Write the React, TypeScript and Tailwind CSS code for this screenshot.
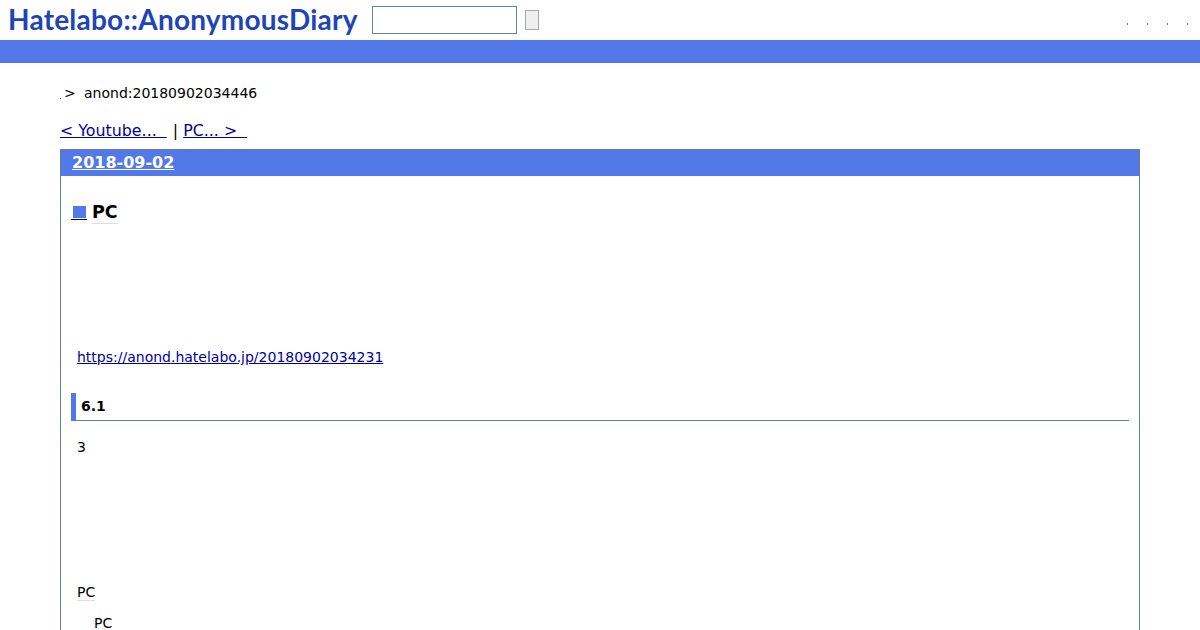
export default function App() {
  const font = { fontFamily: '"DejaVu Sans", sans-serif' };
  return (
    <div className="h-[630px] w-[1200px] overflow-hidden bg-white text-black" style={font}>
      <header className="flex h-10 items-start">
        <a className="ml-2 mt-0.5 w-[352px] whitespace-nowrap font-['Lato',sans-serif] text-[28px] leading-[34px] font-bold tracking-[0.22px] text-[#1f45b5]">
          Hatelabo::AnonymousDiary
        </a>
        <input className="ml-3 mt-1.5 h-7 w-[145px] border border-[#6b7f9f] bg-white" />
        <button className="ml-2 mt-2.5 h-5 w-3.5 border border-[#a9a9a9] bg-[#efefef]" />
        <div className="ml-auto mr-3 mt-[23px] flex gap-[19px]">
          <span className="h-0.5 w-px bg-[#777]" />
          <span className="h-0.5 w-px bg-[#777]" />
          <span className="h-0.5 w-px bg-[#777]" />
          <span className="h-0.5 w-px bg-[#777]" />
        </div>
      </header>
      <div className="h-[23px] bg-[#5279e7]" />
      <main className="px-[60px]">
        <p className="mt-[21px] flex h-[18px] items-center text-sm leading-[18px]">
          <span className="flex h-[18px] w-1 items-end pb-0.5">
            <span className="mb-px h-px w-px bg-[#666]" />
          </span>
          <span className="w-5">&gt;</span>
          <span>anond:20180902034446</span>
        </p>
        <nav className="mt-[19px] h-[19px] text-[15.84px] leading-[19px] whitespace-pre">
          <a className="text-[#0000a0] underline">&lt; Youtube...  </a>
          <span className="ml-px"> | </span>
          <a className="text-[#0000a0] underline">PC... &gt;  </a>
        </nav>
        <section className="mt-[9px] h-[600px] border border-[#6b7aa5]">
          <h2 className="h-[26px] bg-[#5279e7] pl-[11px] text-base leading-[26px] font-bold text-white underline">2018-09-02</h2>
          <div className="px-[10px]">
            <h3 className="mt-[25px] flex h-[23px] items-start text-[17.5px] leading-[23px] font-bold">
              <a className="flex h-[19px] w-[16px] items-end justify-center border-b border-[#00008b]">
                <span className="mb-px h-[12px] w-[13px] bg-[#5279e7]" />
              </a>
              <span className="ml-[5px] h-[23px] border-b border-[#ddd]">PC</span>
            </h3>
            <p className="ml-1.5 mt-[124px] h-[18px] text-sm leading-[18px]">
              <a className="text-[#0000a0] underline">https://anond.hatelabo.jp/20180902034231</a>
            </p>
            <h4 className="mt-[27px] h-7 border-b border-[#6b7aa5] border-l-[5px] border-l-[#5279e7] pl-[5px] text-sm leading-[27px] font-bold">6.1</h4>
            <p className="ml-1.5 mt-[17px] h-[18px] text-sm leading-[18px]">3</p>
            <p className="ml-1.5 mt-[127px] h-[18px] w-fit border-b border-[#ddd] text-sm leading-[18px]">PC</p>
            <p className="ml-[23px] mt-[13px] h-[18px] text-sm leading-[18px]">PC</p>
          </div>
        </section>
      </main>
    </div>
  );
}
